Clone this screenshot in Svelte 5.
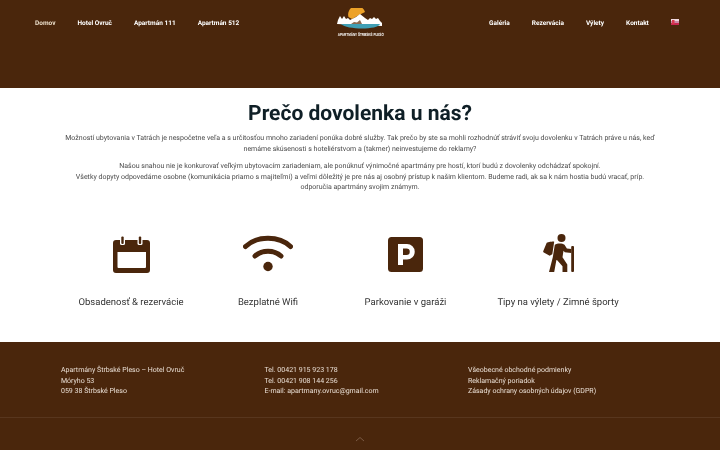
<script>
  const left = ['Domov', 'Hotel Ovruč', 'Apartmán 111', 'Apartmán 512'];
  const right = ['Galéria', 'Rezervácia', 'Výlety', 'Kontakt'];
  const foot = [
    ['Apartmány Štrbské Pleso – Hotel Ovruč', 'Móryho 53', '059 38 Štrbské Pleso'],
    ['Tel. 00421 915 923 178', 'Tel. 00421 908 144 256', 'E-mail: apartmany.ovruc@gmail.com'],
    ['Všeobecné obchodné podmienky', 'Reklamačný poriadok', 'Zásady ochrany osobných údajov (GDPR)']
  ];
</script>

<div class="page">
  <header>
    <nav class="left">
      {#each left as l, i}<span class="link" class:active={i === 0}>{l}</span>{/each}
    </nav>
    <div class="logo">
      <svg width="49" height="23" viewBox="0 0 49 23">
        <path d="M12.500 9a8.500 8.500 0 0 1 16.500-5l-6 3-7 4z" fill="#eda228"/>
        <path d="M1 16l1-4 2-4 2 3 2-3 2 3 2-1 2 2 6-3 4-3 5 4 3 2 2-2 2 1 2-2 2 2 2-1 2 3 2 2v3z" fill="#fff"/>
        <path d="M15 16l3-2 3 .5 3-2.500 2 4z" fill="#8a6a50"/>
        <path d="M5 16h39c-2 6-33 6-39 0z" fill="#3f9fb5"/>
      </svg>
      <span class="logotext">APARTMÁNY ŠTRBSKÉ PLESO</span>
    </div>
    <nav class="right">
      {#each right as l}<span class="link">{l}</span>{/each}
      <svg class="flag" width="8" height="6" viewBox="0 0 8 6">
        <rect width="8" height="2" fill="#f1d8e0"/>
        <rect y="2" width="8" height="2" fill="#c98aa8"/>
        <rect y="4" width="8" height="2" fill="#c8274f"/>
        <rect x="1" y="1" width="2.500" height="4" fill="#d8384f"/>
      </svg>
    </nav>
  </header>

  <main>
    <h1>Prečo dovolenka u nás?</h1>
    <div class="intro">
      <p>Možností ubytovania v Tatrách je nespočetne veľa a s určitosťou mnoho zariadení ponúka dobré služby. Tak prečo by ste sa mohli rozhodnúť stráviť svoju dovolenku v Tatrách práve u nás, keď<br />nemáme skúsenosti s hoteliérstvom a (takmer) neinvestujeme do reklamy?</p>
      <p>Našou snahou nie je konkurovať veľkým ubytovacím zariadeniam, ale ponúknuť výnimočné apartmány pre hostí, ktorí budú z dovolenky odchádzať spokojní.<br />Všetky dopyty odpovedáme osobne (komunikácia priamo s majiteľmi) a veľmi dôležitý je pre nás aj osobný prístup k našim klientom. Budeme radi, ak sa k nám hostia budú vracať, príp.<br />odporučia apartmány svojim známym.</p>
    </div>
    <div class="features">
      <div class="feature">
        <svg width="37" height="42" viewBox="0 0 37 42">
          <path fill="#4a260c" fill-rule="evenodd" d="M3 6h31a3 3 0 0 1 3 3v27a3 3 0 0 1-3 3H3a3 3 0 0 1-3-3V9a3 3 0 0 1 3-3zM4.500 18v15a1 1 0 0 0 1 1h26.500a1 1 0 0 0 1-1V18z"/>
          <rect x="7" y="2" width="5" height="9" rx="1.500" fill="#fff"/>
          <rect x="24.500" y="2" width="5" height="9" rx="1.500" fill="#fff"/>
          <rect x="8.300" y="2.500" width="2.400" height="7.500" rx="1" fill="#4a260c"/>
          <rect x="25.800" y="2.500" width="2.400" height="7.500" rx="1" fill="#4a260c"/>
        </svg>
        <span>Obsadenosť &amp; rezervácie</span>
      </div>
      <div class="feature">
        <svg width="50" height="42" viewBox="0 0 50 42">
          <path d="M2.500 12.500C14 1.500 36 1.500 47.500 12.500" fill="none" stroke="#4a260c" stroke-width="5" stroke-linecap="round"/>
          <path d="M12 22C19 15.500 31 15.500 38 22" fill="none" stroke="#4a260c" stroke-width="5" stroke-linecap="round"/>
          <circle cx="25" cy="32.500" r="4.700" fill="#4a260c"/>
        </svg>
        <span>Bezplatné Wifi</span>
      </div>
      <div class="feature">
        <svg width="35" height="42" viewBox="0 0 35 42">
          <rect y="3" width="35" height="35" rx="3.500" fill="#4a260c"/>
          <path fill="#fff" fill-rule="evenodd" d="M10 10h9a7.500 7.500 0 0 1 0 15.500h-4v5.500h-5zM15 14.500v6.500h3.500a3.200 3.200 0 0 0 0-6.500z"/>
        </svg>
        <span>Parkovanie v garáži</span>
      </div>
      <div class="feature">
        <svg width="31" height="42" viewBox="0 0 31 42">
          <circle cx="18.500" cy="4" r="4" fill="#4a260c"/>
          <path fill="#4a260c" d="M3.500 9.200c.3-.8 6.500-2 7.700-1.500l-1.900 12.500-2.600 1.500-5.900-3.100c-.6-.3-.8-.8-.6-1.400z"/>
          <path fill="#4a260c" d="M11.800 10.700c2.500-1.500 7.500-1.500 9.700 0l2.400 3.700 4.400.5v4l-6.500-.6-1.300-1.600-1 6.500 4.800 7.300v7.500h-4.800v-5.700l-5.300-6-.8-.2-2.200 11.900h-5.200l3.800-14.700z"/>
          <rect x="28.200" y="12" width="2.800" height="26" rx="1" fill="#4a260c"/>
        </svg>
        <span>Tipy na výlety / Zimné športy</span>
      </div>
    </div>
  </main>

  <footer>
    <div class="cols">
      {#each foot as col}
        <div class="col">
          {#each col as line}<div>{line}</div>{/each}
        </div>
      {/each}
    </div>
    <div class="bottom">
      <svg width="10" height="6" viewBox="0 0 10 6"><path d="M1 5l4-3.500L9 5" fill="none" stroke="#7a5a44" stroke-width="1"/></svg>
    </div>
  </footer>
</div>

<style>
  :global(body) { margin: 0; }
  .page {
    width: 720px;
    height: 450px;
    overflow: hidden;
    font-family: Roboto, "Liberation Sans", sans-serif;
    background: #fff;
    text-rendering: geometricPrecision;
    will-change: transform;
  }
  header {
    height: 88px;
    background: #4a260c;
    display: flex;
    align-items: flex-start;
    box-sizing: border-box;
    padding: 8px 35px 0;
  }
  nav { display: flex; align-items: center; height: 29px; }
  .left { gap: 22px; width: 301px; }
  .right { gap: 22px; margin-left: 104px; }
  .link { font-size: 6.500px; font-weight: 700; color: #fff; white-space: nowrap; }
  .active { color: #e9dcc8; }
  .flag { margin-top: -2px; }
  .logo { display: flex; flex-direction: column; align-items: center; width: 49px; }
  .logotext {
    margin-top: 1px;
    font-size: 4.500px;
    line-height: 5px;
    font-weight: 700;
    color: #fff;
    white-space: nowrap;
    font-family: "Liberation Sans", sans-serif;
    transform: scaleX(0.68);
  }
  main {
    height: 254px;
    text-align: center;
    color: #4a4a4a;
    box-sizing: border-box;
    padding-top: 12px;
  }
  h1 {
    margin: 0;
    font-size: 21px;
    line-height: 28px;
    font-weight: 700;
    color: #0f1f26;
  }
  .intro { margin-top: 5px; font-size: 7px; line-height: 10.500px; }
  .intro p { margin: 0 0 7px; }
  .features {
    margin-top: 41px;
    display: grid;
    grid-template-columns: 142px 132px 143px 162px;
    padding-left: 60px;
  }
  .feature { display: flex; flex-direction: column; align-items: center; gap: 21px; }
  .feature span { font-size: 9.500px; line-height: 12px; color: #333; white-space: nowrap; }
  footer { height: 108px; background: #4a260c; color: #eadfd5; font-size: 7px; }
  .cols {
    height: 76px;
    box-sizing: border-box;
    padding: 23px 0 0 61px;
    display: grid;
    grid-template-columns: repeat(3, 203.500px);
    line-height: 10.500px;
    border-bottom: 1px solid #58361e;
  }
  .bottom { display: flex; justify-content: center; padding-top: 18px; }
</style>
